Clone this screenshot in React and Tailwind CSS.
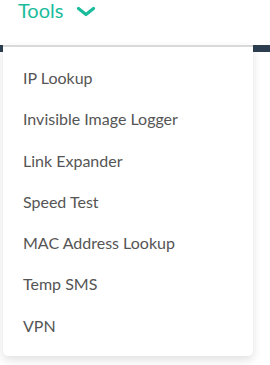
import React from 'react';

const items = [
  'IP Lookup',
  'Invisible Image Logger',
  'Link Expander',
  'Speed Test',
  'MAC Address Lookup',
  'Temp SMS',
  'VPN',
];

export default function App() {
  return (
    <div className="relative w-[270px] h-[365px] bg-white overflow-hidden font-['Lato','Liberation_Sans',sans-serif]">
      <div className="h-[45px] pl-[18px] flex items-start">
        <button className="flex items-center gap-[13px] text-[20px] leading-[20px] text-[#1abc9c]">
          <span>Tools</span>
          <svg width="20" height="11" viewBox="0 0 20 11" fill="none" className="mt-[2px]">
            <path d="M2.5 2.5l7.5 6 7.5-6" stroke="#1abc9c" strokeWidth="3.2" strokeLinecap="round" strokeLinejoin="round" />
          </svg>
        </button>
      </div>
      <div className="h-[7px] bg-[#2c3e50]" />

      <div className="absolute left-[3px] top-[45px] w-[250px] bg-white border-t-2 border-[#d9d9d9] rounded-b-[5px] shadow-[0_4px_10px_rgba(0,0,0,0.12)] py-[10px]">
        {items.map((item) => (
          <a
            key={item}
            href="#"
            className="block h-[41.3px] leading-[41.3px] pl-[20px] text-[16px] text-[#555]"
          >
            {item}
          </a>
        ))}
      </div>
    </div>
  );
}
